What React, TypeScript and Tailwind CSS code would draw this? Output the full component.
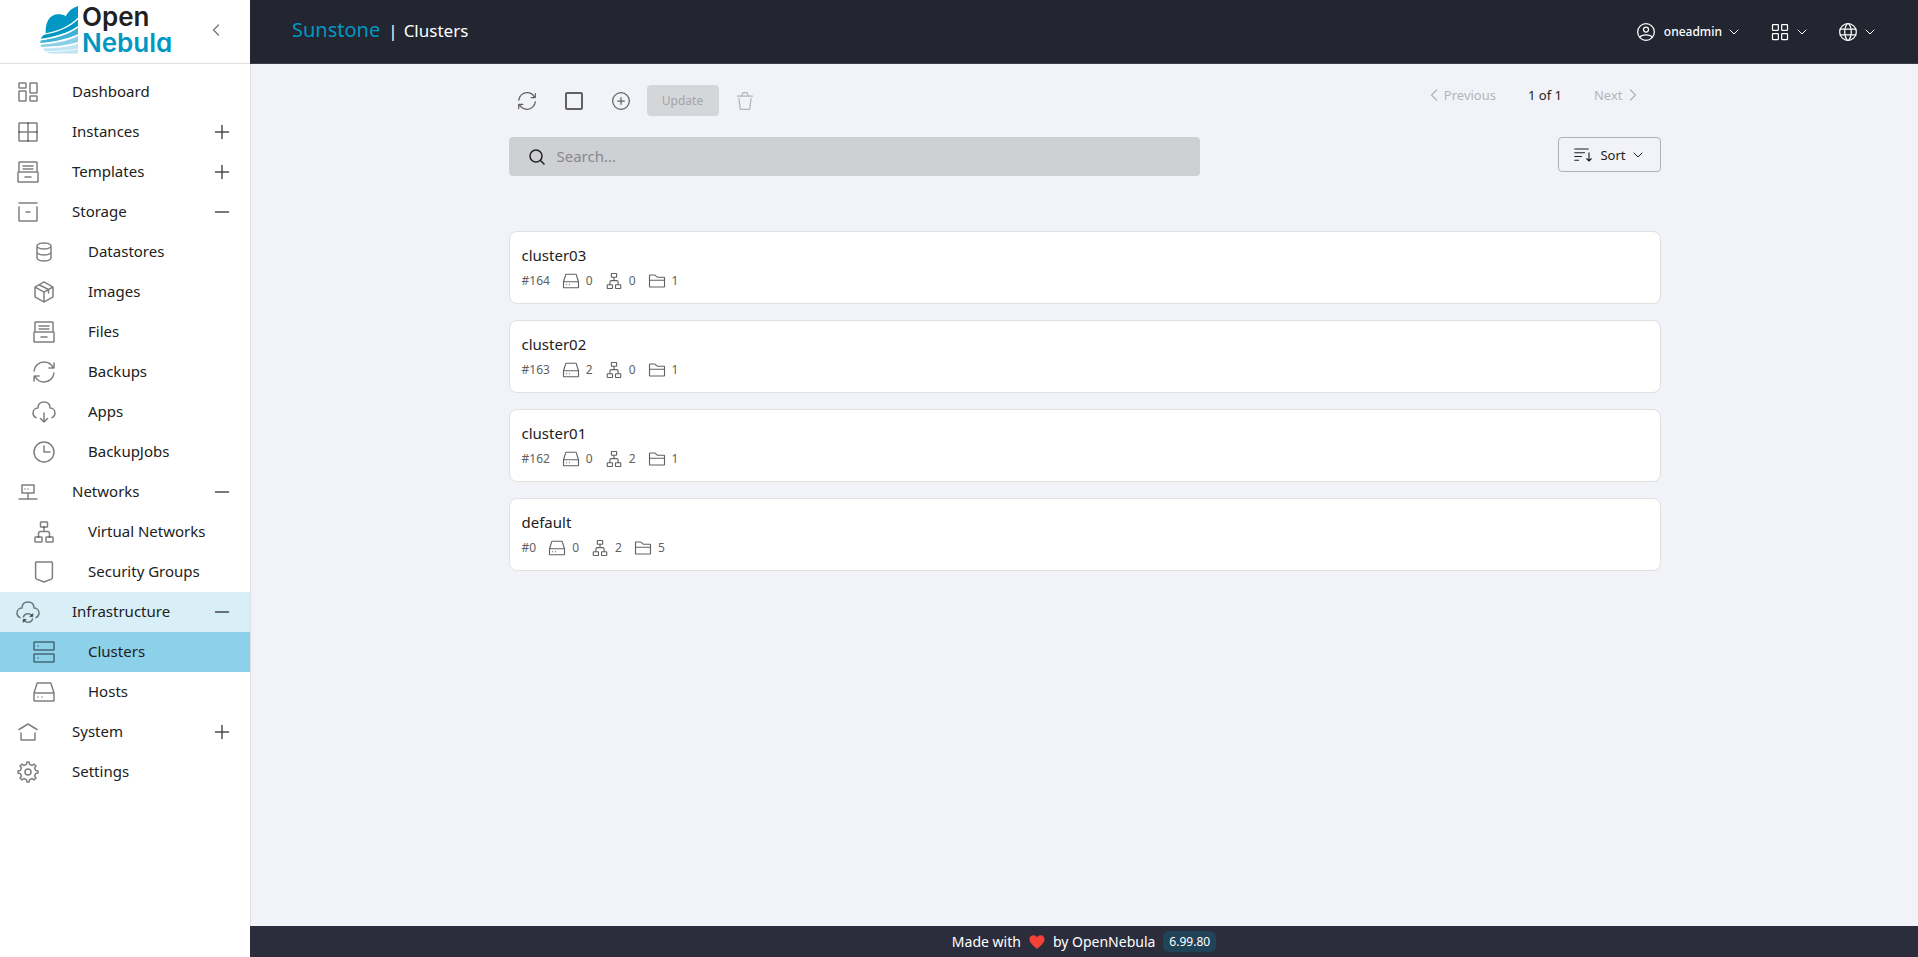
import type { ReactNode } from 'react'

type IconProps = { className?: string; children: ReactNode; stroke?: number }

function Icon({ className = 'size-6', children, stroke = 1.5 }: IconProps) {
  return (
    <svg
      viewBox="0 0 24 24"
      fill="none"
      stroke="currentColor"
      strokeWidth={stroke}
      strokeLinecap="round"
      strokeLinejoin="round"
      aria-hidden="true"
      className={`shrink-0 ${className}`}
    >
      {children}
    </svg>
  )
}

const shapes = {
  dashboard: (
    <>
      <rect x="3" y="3" width="7" height="5" rx=".6" />
      <rect x="3" y="11" width="7" height="10" rx=".6" />
      <rect x="14" y="3" width="7" height="10" rx=".6" />
      <rect x="14" y="16" width="7" height="5" rx=".6" />
    </>
  ),
  grid: (
    <>
      <rect x="3" y="3" width="18" height="18" rx=".6" />
      <path d="M12 3v18M3 12h18" />
    </>
  ),
  archive: (
    <path d="M7 6h10M7 9h10M9 17h6M3 12h-.4a.6.6 0 0 0-.6.6v8.8a.6.6 0 0 0 .6.6h18.8a.6.6 0 0 0 .6-.6v-8.8a.6.6 0 0 0-.6-.6H21M3 12V2.6a.6.6 0 0 1 .6-.6h16.8a.6.6 0 0 1 .6.6V12M3 12h18" />
  ),
  box: <path d="M21 7v13.4a.6.6 0 0 1-.6.6H3.6a.6.6 0 0 1-.6-.6V7M21 3H3M10 12h4" />,
  database: (
    <path d="M5 12v6s0 3 7 3 7-3 7-3v-6M5 6v6s0 3 7 3 7-3 7-3V6M12 3c7 0 7 3 7 3s0 3-7 3-7-3-7-3 0-3 7-3Z" />
  ),
  parcel: (
    <path d="M21 7.353v9.294a.6.6 0 0 1-.309.525l-8.4 4.666a.6.6 0 0 1-.582 0l-8.4-4.666A.6.6 0 0 1 3 16.647V7.353a.6.6 0 0 1 .309-.524l8.4-4.667a.6.6 0 0 1 .582 0l8.4 4.667a.6.6 0 0 1 .309.524ZM3.528 7.294l8.18 4.544a.6.6 0 0 0 .583 0l8.209-4.56M12 21v-9M7 4.8l9.1 4.4a.6.6 0 0 1 .4.6V13" />
  ),
  refresh: (
    <path d="M21.168 8A10.003 10.003 0 0 0 12 2C6.815 2 2.551 5.947 2.05 11M17 8h4.4a.6.6 0 0 0 .6-.6V3M2.881 16c1.544 3.532 5.068 6 9.168 6 5.186 0 9.45-3.947 9.951-9M7.05 16h-4.4a.6.6 0 0 0-.6.6V21" />
  ),
  cloudDown: (
    <path d="M12 13v9m0 0 3.5-3.5M12 22l-3.5-3.5M20 17.607c1.494-.585 3-1.918 3-4.607 0-4-3.333-5-5-5 0-2 0-6-6-6S6 6 6 8c-1.667 0-5 1-5 5 0 2.689 1.506 4.022 3 4.607" />
  ),
  clock: (
    <>
      <circle cx="12" cy="12" r="10" />
      <path d="M12 6v6h6" />
    </>
  ),
  network: <path d="M3 19h18M12 19v-6M6 5h12v8H6zM9 9.01l.01-.011M12 9.01l.01-.011" />,
  tree: (
    <>
      <rect x="3" y="17" width="7" height="5" rx=".6" />
      <rect x="8.5" y="2" width="7" height="5" rx=".6" />
      <rect x="14" y="17" width="7" height="5" rx=".6" />
      <path d="M6.5 17v-3.5a2 2 0 0 1 2-2h7a2 2 0 0 1 2 2V17M12 11.5V7" />
    </>
  ),
  shield: (
    <path d="M3.6 2.6v14.6c0 .8.4 1.5 1.100 1.900L12 22l7.300-2.900c.7-.4 1.100-1.100 1.100-1.900V2.6a.6.6 0 0 0-.6-.6H4.200a.6.6 0 0 0-.6.6Z" />
  ),
  cloudSync: (
    <>
      <path d="M20 17.607c1.494-.585 3-1.918 3-4.607 0-4-3.333-5-5-5 0-2 0-6-6-6S6 6 6 8c-1.667 0-5 1-5 5 0 2.689 1.506 4.022 3 4.607" />
      <path d="M7.500 17c.5-1.900 2.300-3.200 4.500-3.200 1.500 0 2.800.6 3.600 1.600M16.500 19c-.5 1.900-2.300 3.200-4.500 3.200-1.500 0-2.800-.6-3.600-1.600" />
      <path fill="currentColor" strokeWidth="1" d="M16.800 14v2.600h-2.600zM7.200 22v-2.600h2.600z" />
    </>
  ),
  server: (
    <>
      <rect x="2" y="2" width="20" height="8" rx=".6" />
      <rect x="2" y="14" width="20" height="8" rx=".6" />
      <path d="M6 18.010l.01-.011M6 6.010l.01-.011" />
    </>
  ),
  drive: (
    <path d="M2 13v7.400a.6.6 0 0 0 .6.6h18.800a.6.6 0 0 0 .6-.6V13M2 13h20M2 13l3-9.570A.6.6 0 0 1 5.600 3h12.800a.6.6 0 0 1 .6.430L22 13M6 17.010l.01-.011M10 17.010l.01-.011" />
  ),
  home: <path d="m3 9.500 9-5.500 9 5.500M19 13v6.400a.6.6 0 0 1-.6.6H5.600a.6.6 0 0 1-.6-.6V13" />,
  gear: (
    <>
      <circle cx="12" cy="12" r="3" />
      <path d="m19.622 10.395-1.097-2.650L20 6l-2-2-1.735 1.483-2.707-1.113L12.935 2h-1.954l-.632 2.401-2.645 1.115L6 4 4 6l1.453 1.789-1.080 2.657L2 11v2l2.401.655L5.516 16.300 4 18l2 2 1.791-1.460 2.606 1.072L11 22h2l.604-2.387 2.651-1.098C16.697 18.831 18 20 18 20l2-2-1.484-1.750 1.098-2.652 2.386-.62V11z" />
    </>
  ),
  plus: <path d="M5.500 12h13M12 5.500v13" />,
  minus: <path d="M5.500 12h13" />,
  chevronLeft: <path d="m15 6-6 6 6 6" />,
  chevronRight: <path d="m9 6 6 6-6 6" />,
  chevronDown: <path d="m6 9 6 6 6-6" />,
  plusCircle: (
    <>
      <circle cx="12" cy="12" r="10" />
      <path d="M8 12h8M12 8v8" />
    </>
  ),
  trash: (
    <path d="m19.262 9-1.540 12.500a.6.6 0 0 1-.595.500H6.873a.6.6 0 0 1-.595-.5L4.738 9M21 6h-5.625M3 6h5.625m0 0V4a2 2 0 0 1 2-2h2.750a2 2 0 0 1 2 2v2m-6.750 0h6.750" />
  ),
  search: <path d="m15.500 15.500 3.500 3.500M5 11a6 6 0 1 0 12 0 6 6 0 1 0-12 0Z" />,
  sort: <path d="M1 4h18M1 9h13M1 14h9M1 19h5M20 9v11m0 0 3-3m-3 3-3-3" />,
  user: (
    <>
      <circle cx="12" cy="12" r="10" />
      <circle cx="12" cy="9" r="3" />
      <path d="M4.271 18.346S6.500 15.500 12 15.500s7.730 2.846 7.730 2.846" />
    </>
  ),
  apps: (
    <>
      <rect x="3" y="3" width="7" height="7" rx=".6" />
      <rect x="14" y="3" width="7" height="7" rx=".6" />
      <rect x="3" y="14" width="7" height="7" rx=".6" />
      <rect x="14" y="14" width="7" height="7" rx=".6" />
    </>
  ),
  globe: (
    <>
      <circle cx="12" cy="12" r="10" />
      <path d="M13 2.050S16 6 16 12s-3 9.950-3 9.950M11 21.950S8 18 8 12s3-9.950 3-9.950M2.630 15.500h18.740M2.630 8.500h18.740" />
    </>
  ),
  folder: (
    <path d="M2 11V4.600a.6.6 0 0 1 .6-.6h6.178a.6.6 0 0 1 .390.144l3.164 2.712a.6.6 0 0 0 .390.144H21.400a.6.6 0 0 1 .6.6V11M2 11v8.400a.6.6 0 0 0 .6.6h18.800a.6.6 0 0 0 .6-.6V11M2 11h20" />
  ),
}

type ShapeName = keyof typeof shapes

type MenuEntry = {
  label: string
  icon: ShapeName
  toggle?: 'plus' | 'minus'
  active?: boolean
  children?: { label: string; icon: ShapeName; active?: boolean }[]
}

const menu: MenuEntry[] = [
  { label: 'Dashboard', icon: 'dashboard' },
  { label: 'Instances', icon: 'grid', toggle: 'plus' },
  { label: 'Templates', icon: 'archive', toggle: 'plus' },
  {
    label: 'Storage',
    icon: 'box',
    toggle: 'minus',
    children: [
      { label: 'Datastores', icon: 'database' },
      { label: 'Images', icon: 'parcel' },
      { label: 'Files', icon: 'archive' },
      { label: 'Backups', icon: 'refresh' },
      { label: 'Apps', icon: 'cloudDown' },
      { label: 'BackupJobs', icon: 'clock' },
    ],
  },
  {
    label: 'Networks',
    icon: 'network',
    toggle: 'minus',
    children: [
      { label: 'Virtual Networks', icon: 'tree' },
      { label: 'Security Groups', icon: 'shield' },
    ],
  },
  {
    label: 'Infrastructure',
    icon: 'cloudSync',
    toggle: 'minus',
    active: true,
    children: [
      { label: 'Clusters', icon: 'server', active: true },
      { label: 'Hosts', icon: 'drive' },
    ],
  },
  { label: 'System', icon: 'home', toggle: 'plus' },
  { label: 'Settings', icon: 'gear' },
]

const clusters = [
  { id: 164, name: 'cluster03', hosts: 0, vnets: 0, datastores: 1 },
  { id: 163, name: 'cluster02', hosts: 2, vnets: 0, datastores: 1 },
  { id: 162, name: 'cluster01', hosts: 0, vnets: 2, datastores: 1 },
  { id: 0, name: 'default', hosts: 0, vnets: 2, datastores: 5 },
]

function Logo() {
  return (
    <div className="flex items-center gap-1">
      <svg viewBox="0 0 38 48" className="h-12 w-[38px] shrink-0" aria-hidden="true">
        <path
          fill="#0098c3"
          d="M38 0v11.500C30 20 18 25 5.700 27.200 5 16 10 8.200 18 8.200c3 0 6 .6 7.700 2C28 5.500 32 2 38 0Z"
        />
        <path fill="#0098c3" d="M38 13.500v6.500C28 27 14 31 1 32.800c.6-1.800 1.600-3.200 3.200-4C17 26.500 29 22 38 13.500Z" />
        <path fill="#3fb2d6" d="M38 21.800v6.400C26 33.500 12 36 .3 37c0-1 .1-1.800.4-2.600C14 32.800 27 29.500 38 21.800Z" />
        <path fill="#8acfe6" d="M38 30v6C26 39.500 13 40.500 1.500 41c-.6-.6-1-1.400-1.100-2.200C14 37.800 27 35.500 38 30Z" />
        <path fill="#bfe5f2" d="M38 37.800v9.700H12c-4 0-7.500-2-9.300-5C15 42.300 27 41.500 38 37.800Z" />
        <path fill="none" stroke="#fff" d="M5 45.800c11-.6 22-.8 33-2.800" strokeWidth=".8" />
      </svg>
      <div className="flex flex-col font-['Inter',sans-serif] text-[26px] leading-[26px] font-semibold [font-feature-settings:'cv11']">
        <span className="text-[#212121]">Open</span>
        <span className="text-[#0098c3]">Nebula</span>
      </div>
    </div>
  )
}

function Sidebar() {
  return (
    <aside className="flex w-[250px] shrink-0 flex-col bg-white">
      <div className="flex h-16 items-center justify-between border-b border-[#e0e0e0] pr-6 pb-1 pl-10">
        <Logo />
        <button type="button" aria-label="Collapse menu" className="text-[#757575]">
          <Icon className="size-5">{shapes.chevronLeft}</Icon>
        </button>
      </div>
      <nav className="py-2">
        <ul>
          {menu.map((entry) => (
            <li key={entry.label}>
              <a
                href="#"
                className={`flex h-10 items-center pr-4 pl-4 ${entry.active ? 'bg-[#d9eff7]' : ''}`}
              >
                <Icon className="mr-8 size-6 text-black/50">{shapes[entry.icon]}</Icon>
                <span className="grow pb-0.5">{entry.label}</span>
                {entry.toggle && <Icon className="size-6 text-black/70">{shapes[entry.toggle]}</Icon>}
              </a>
              {entry.children && (
                <ul>
                  {entry.children.map((child) => (
                    <li key={child.label}>
                      <a
                        href="#"
                        className={`flex h-10 items-center pl-8 ${child.active ? 'bg-[#8cd0e9]' : ''}`}
                      >
                        <Icon className="mr-8 size-6 text-black/50">{shapes[child.icon]}</Icon>
                        <span className="pb-0.5">{child.label}</span>
                      </a>
                    </li>
                  ))}
                </ul>
              )}
            </li>
          ))}
        </ul>
      </nav>
    </aside>
  )
}

function TopBar() {
  return (
    <header className="flex h-16 items-center justify-between border-b border-[#3a3c48] bg-[#232530] pr-10 pl-[42px] text-white">
      <h1 className="flex items-baseline pb-1">
        <span className="text-xl text-[#0098c3]">Sunstone</span>
        <span className="ml-2 text-[17px]">|</span>
        <span className="ml-1.5 text-[17px]">Clusters</span>
      </h1>
      <div className="flex items-center gap-7 text-xs font-medium">
        <button type="button" className="flex items-center">
          <Icon className="mr-2 size-5">{shapes.user}</Icon>
          oneadmin
          <Icon className="ml-1 size-4">{shapes.chevronDown}</Icon>
        </button>
        <button type="button" aria-label="Views" className="flex items-center gap-1">
          <Icon className="size-5">{shapes.apps}</Icon>
          <Icon className="size-4">{shapes.chevronDown}</Icon>
        </button>
        <button type="button" aria-label="Zone" className="flex items-center gap-1">
          <Icon className="size-5">{shapes.globe}</Icon>
          <Icon className="size-4">{shapes.chevronDown}</Icon>
        </button>
      </div>
    </header>
  )
}

function Toolbar() {
  return (
    <div className="flex items-start justify-between">
      <div className="flex items-center pl-2">
        <button type="button" aria-label="Refresh" className="mr-7 text-[#616161]">
          <Icon className="size-5">{shapes.refresh}</Icon>
        </button>
        <input
          type="checkbox"
          aria-label="Select all"
          className="mr-7 size-[18px] appearance-none rounded-xs border-2 border-[#616161]"
        />
        <button type="button" aria-label="Create" className="mr-4 text-[#616161]">
          <Icon className="size-5">{shapes.plusCircle}</Icon>
        </button>
        <button
          type="button"
          disabled
          className="mr-4 h-[31px] w-[72px] rounded-sm bg-[#d5d6d9] text-xs text-[#a3a4a7]"
        >
          Update
        </button>
        <button type="button" disabled aria-label="Delete" className="text-[#b4b5b8]">
          <Icon className="size-5">{shapes.trash}</Icon>
        </button>
      </div>
      <div className="mr-[18px] flex h-5 items-center text-[13px]">
        <button type="button" disabled className="flex items-center text-[#b4b5b8]">
          <Icon className="size-5">{shapes.chevronLeft}</Icon>
          Previous
        </button>
        <span className="mx-8">1 of 1</span>
        <button type="button" disabled className="flex items-center text-[#b4b5b8]">
          Next
          <Icon className="size-5">{shapes.chevronRight}</Icon>
        </button>
      </div>
    </div>
  )
}

function SearchRow() {
  return (
    <div className="mt-[21px] flex items-start justify-between">
      <label className="flex h-[39px] w-3/5 items-center gap-2 rounded-sm bg-[#cfd0d4] pl-4">
        <Icon className="size-6">{shapes.search}</Icon>
        <input
          type="search"
          aria-label="Search"
          placeholder="Search..."
          className="h-full grow bg-transparent pb-0.5 outline-none placeholder:text-[#87888b]"
        />
      </label>
      <button
        type="button"
        className="flex h-[35px] items-center rounded-sm border border-[#b0b1b5] pr-3.5 pl-[15px] text-[13px]"
      >
        <Icon className="mr-2 size-[18px]">{shapes.sort}</Icon>
        Sort
        <Icon className="ml-1 size-4">{shapes.chevronDown}</Icon>
      </button>
    </div>
  )
}

function Stat({ icon, label, value }: { icon: ShapeName; label: string; value: number }) {
  return (
    <span className="flex items-center gap-1.5" title={label}>
      <Icon className="size-[18px]">{shapes[icon]}</Icon>
      {value}
    </span>
  )
}

export default function App() {
  return (
    <div className="flex min-h-screen bg-[#f2f3f8] font-['Noto_Sans',sans-serif] text-[15px] leading-6 text-[#212121]">
      <Sidebar />
      <div className="flex min-w-0 grow flex-col">
        <TopBar />
        <div className="grow border-l border-[#e0e0e0]">
          <main className="mx-auto w-full max-w-[1152px] pt-[21px]">
            <Toolbar />
            <SearchRow />
            <ul className="mt-[55px] flex flex-col gap-4">
              {clusters.map((cluster) => (
                <li
                  key={cluster.id}
                  className="rounded-lg border border-[#e0e0e0] bg-white px-3 pt-[11px] pb-3"
                >
                  <h2>{cluster.name}</h2>
                  <div className="mt-1 flex h-5 items-center gap-3 text-xs text-[#616161]">
                    <span>#{cluster.id}</span>
                    <Stat icon="drive" label="Hosts" value={cluster.hosts} />
                    <Stat icon="tree" label="Virtual networks" value={cluster.vnets} />
                    <Stat icon="folder" label="Datastores" value={cluster.datastores} />
                  </div>
                </li>
              ))}
            </ul>
          </main>
        </div>
        <footer className="flex h-[31px] items-center justify-center bg-[#2b2d3d] text-sm text-white">
          <span>Made with</span>
          <svg viewBox="0 0 16 16" className="mx-2 size-4" role="img" aria-label="love">
            <path
              fill="#f44336"
              d="M8 14.800C5 12.400.500 9 .500 5.200.500 2.800 2.300 1.200 4.400 1.200 6 1.200 7.300 2 8 3.400c.7-1.400 2-2.200 3.600-2.200 2.100 0 3.900 1.600 3.900 4C15.500 9 11 12.400 8 14.800Z"
            />
          </svg>
          <span>by OpenNebula</span>
          <span className="ml-2 rounded-md bg-[#214357] px-1.5 text-xs leading-[21px]">6.99.80</span>
        </footer>
      </div>
    </div>
  )
}
